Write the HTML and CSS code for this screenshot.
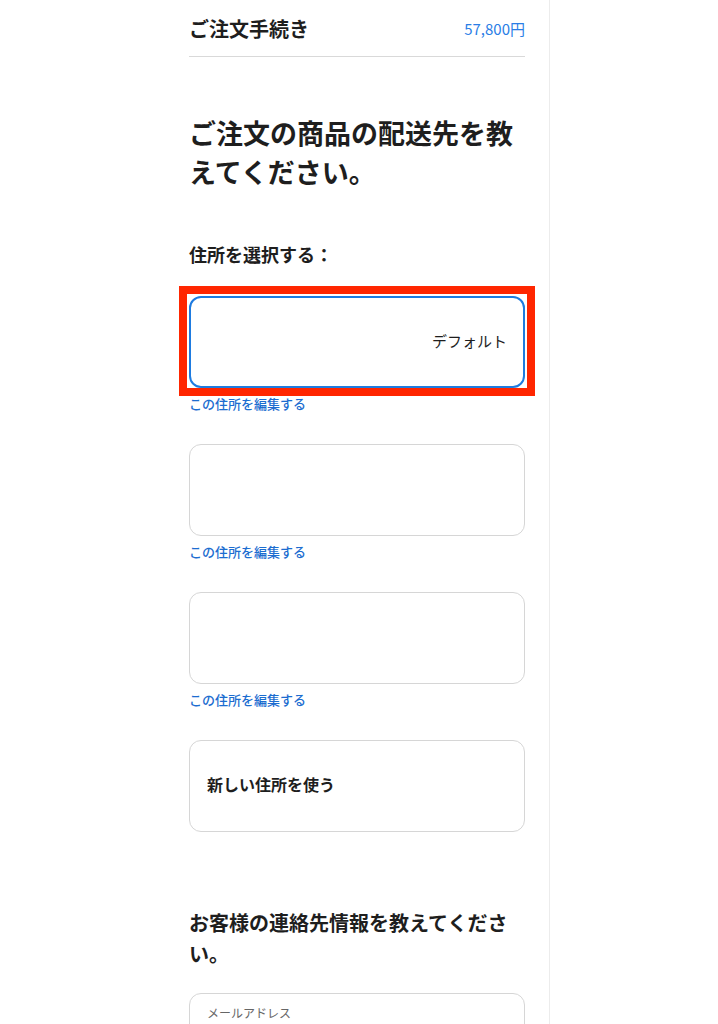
FILE: index.html
```html
<!DOCTYPE html>
<html lang="ja">
<head>
    <meta charset="utf-8">
    <title>ご注文手続き</title>
    <link rel="stylesheet" href="styles.css">
</head>
<body>
    <div class="page">
        <main class="checkout">
            <header class="checkout-header">
                <h1 class="checkout-title">ご注文手続き</h1>
                <span class="checkout-total">57,800円</span>
            </header>

            <h2 class="section-title">ご注文の商品の配送先を教えてください。</h2>

            <h3 class="select-label">住所を選択する：</h3>

            <div class="address-list">
                <div class="address-item">
                    <div class="address-card selected">
                        <span class="default-tag">デフォルト</span>
                    </div>
                    <a href="#" class="edit-link">この住所を編集する</a>
                </div>
                <div class="address-item">
                    <div class="address-card"></div>
                    <a href="#" class="edit-link">この住所を編集する</a>
                </div>
                <div class="address-item">
                    <div class="address-card"></div>
                    <a href="#" class="edit-link">この住所を編集する</a>
                </div>
                <div class="address-card new-address">新しい住所を使う</div>
            </div>

            <h2 class="section-title contact-title">お客様の連絡先情報を教えてください。</h2>

            <div class="field">
                <label for="email">メールアドレス</label>
                <input type="email" id="email">
            </div>
        </main>
        <aside class="side"></aside>
    </div>
</body>
</html>
```

FILE: styles.css
```css
body {
    margin: 0;
    font-family: "Noto Sans CJK JP", "Noto Sans", sans-serif;
    color: #1e1e1e;
    background: #fff;
}

.page {
    display: flex;
    min-height: 1024px;
}

.checkout {
    width: 550px;
    box-sizing: border-box;
    padding: 0 24px 0 189px;
    border-right: 1px solid #ececec;
}

.side {
    flex: 1;
}

.checkout-header {
    display: flex;
    justify-content: space-between;
    align-items: center;
    height: 56px;
    border-bottom: 1px solid #d9d9d9;
}

.checkout-title {
    margin: 0;
    font-size: 20px;
    font-weight: bold;
}

.checkout-total {
    font-size: 15px;
    color: #2a7ee6;
}

.section-title {
    margin: 56px 0 0;
    font-size: 27px;
    line-height: 39px;
    font-weight: bold;
}

.select-label {
    margin: 50px 0 0;
    font-size: 18px;
    line-height: 27px;
    font-weight: bold;
}

.address-list {
    display: flex;
    flex-direction: column;
    gap: 31px;
    margin-top: 28px;
}

.address-item {
    display: flex;
    flex-direction: column;
}

.address-card {
    position: relative;
    display: flex;
    align-items: center;
    justify-content: flex-end;
    height: 92px;
    box-sizing: border-box;
    padding: 0 16px 4px;
    border: 1px solid #d6d6d6;
    border-radius: 12px;
}

.address-card.selected {
    border: 2px solid #1e7be0;
}

/* red annotation frame drawn over the chosen card */
.address-card.selected::before {
    content: "";
    position: absolute;
    top: -12px;
    left: -12px;
    right: -12px;
    bottom: -10px;
    border: 8px solid #ff2600;
}

.default-tag {
    font-size: 15px;
}

.address-card.new-address {
    justify-content: flex-start;
    padding-left: 17px;
    font-size: 16px;
    font-weight: bold;
}

.edit-link {
    margin-top: 7px;
    font-size: 13px;
    line-height: 18px;
    font-weight: 500;
    color: #1c6dd0;
    text-decoration: none;
}

.contact-title {
    margin-top: 75px;
    font-size: 20px;
    line-height: 31px;
}

.field {
    margin-top: 24px;
    height: 70px;
    box-sizing: border-box;
    padding: 10px 17px;
    border: 1px solid #d6d6d6;
    border-radius: 12px;
}

.field label {
    display: block;
    font-size: 12px;
    line-height: 18px;
    color: #666;
}

.field input {
    width: 100%;
    border: none;
    outline: none;
    font-size: 16px;
    padding: 0;
}
```
